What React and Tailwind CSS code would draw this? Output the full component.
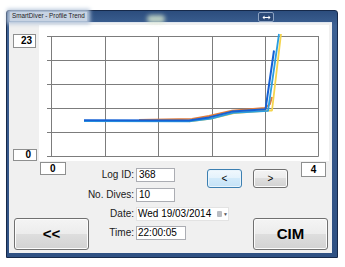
import React from "react";

const btn =
  "flex items-center justify-center border border-[#707070] rounded-[3px] bg-[linear-gradient(#f4f4f4,#ececec_50%,#dedede_50%,#d2d2d2)] shadow-[inset_0_0_0_1px_#fcfcfc]";

const numBox =
  "flex items-center bg-white border border-[#8e8f8f] text-[10px] font-bold text-black leading-none";

const FormRow = ({ label, children, className = "" }) => (
  <div className={`flex items-center ${className}`}>
    <div className="w-[42px] flex justify-end">
      <span className="text-[10px] text-[#1a1a1a] leading-none whitespace-nowrap">{label}</span>
    </div>
    <div className="ml-[2px]">{children}</div>
  </div>
);

const Chart = () => {
  const xs = [12, 66, 119, 173, 226, 279];
  const ys = [11, 35, 59, 83, 107, 131];
  return (
    <svg width="290" height="136" className="block">
      {ys.map((y) => (
        <line key={"h" + y} x1="8" x2="279.5" y1={y + 0.5} y2={y + 0.5} stroke="#7c7c7c" strokeWidth="1" />
      ))}
      {xs.map((x) => (
        <line key={"v" + x} x1={x + 0.5} x2={x + 0.5} y1="11" y2="131.5" stroke="#7c7c7c" strokeWidth="1" />
      ))}
      <polyline
        points="100,95 153,93.8 170,91 193,85.6 226,83 231,79 233,72"
        fill="none" stroke="#e07c3c" strokeWidth="1.8" strokeLinejoin="round" />
      <polyline
        points="150,96.4 172,93.5 195,88 228,85.5 233,85.5 242,9"
        fill="none" stroke="#f4d44c" strokeWidth="1.8" strokeLinejoin="round" />
      <polyline
        points="45,96 150,96.4 172,93.6 194,87.8 229,85.8 240,9"
        fill="none" stroke="#2b9ee0" strokeWidth="1.8" strokeLinejoin="round" />
      <polyline
        points="45,95.2 150,95.6 170,92.4 193,86.6 226.5,84.3 235,25.5"
        fill="none" stroke="#1560d4" strokeWidth="2" strokeLinejoin="round" />
    </svg>
  );
};

export default function App() {
  return (
    <div className="w-[345px] h-[267px] bg-white pt-[10px] pl-[6px] font-['Liberation_Sans',Arial,sans-serif]">
      <div className="relative w-[332px] h-[248px] border border-[#16294a] rounded-t-[3px] bg-[linear-gradient(180deg,#2c4d7d,#3d6193_6%,#37598c_40%,#2f5183)] flex flex-col">
        {/* title bar */}
        <div className="relative h-[11px] flex items-center px-[3px]">
          <span className="px-[2px] h-[9px] flex items-center bg-[#c7d3e3] shadow-[0_0_4px_3px_#b9c8dc] text-[6.3px] text-[#222] leading-none whitespace-nowrap">
            SmartDiver - Profile Trend
          </span>
          <div className="absolute left-[140px] top-[4px] w-[18px] h-[8px] rounded-full bg-[#d9ead0] blur-[2px] opacity-80" />
          <div className="absolute left-[251px] top-[1px] w-[16px] h-[10px] rounded-[2px] border border-[#8da3c2] bg-[#2c4a78] flex items-center justify-center">
            <svg width="9" height="5" viewBox="0 0 9 5">
              <path d="M0.5 2.5 L2.5 0.5 L2.5 4.5 Z M8.5 2.5 L6.5 0.5 L6.5 4.5 Z" fill="#fff" />
              <rect x="2" y="2" width="5" height="1" fill="#fff" />
            </svg>
          </div>
        </div>

        {/* client area */}
        <div className="ml-[2px] mr-[3px] w-[323px] h-[231px] bg-[#f0f0f0] border-t border-[#dfe6ef] flex flex-col">
          {/* chart row */}
          <div className="flex h-[140px]">
            <div className="w-[30px] flex flex-col">
              <div className={`${numBox} ml-[4px] mt-[11px] w-[23px] h-[14px] justify-end pr-[3px]`}>23</div>
              <div className={`${numBox} ml-[4px] mt-auto mb-[1px] w-[24px] h-[12px] justify-end pr-[5px]`}>0</div>
            </div>
            <div className="mt-[2px] w-[290px] h-[136px] bg-white">
              <Chart />
            </div>
          </div>

          {/* controls */}
          <div className="flex h-[91px]">
            <div className="w-[83px] flex flex-col">
              <div className={`${numBox} ml-[31px] w-[26px] h-[13px] pl-[9px]`}>0</div>
              <button className={`${btn} ml-[5px] mt-auto mb-[3px] w-[75px] h-[32px] text-[15px] font-bold text-black`}>
                &lt;&lt;
              </button>
            </div>

            <div className="flex flex-col w-[240px]">
              <div className="flex items-start h-[26px]">
                <FormRow label="Log ID:" className="mt-[6px]">
                  <div className="w-[39px] h-[14px] bg-white border border-[#abadb3] text-[10px] leading-[12px] pl-[2px]">368</div>
                </FormRow>
                <button className="ml-[32px] mt-[7px] w-[35px] h-[19px] flex items-center justify-center rounded-[3px] border border-[#3c7fb1] bg-[linear-gradient(#f1f8fd,#e3f2fc_50%,#d2eafa_50%,#c4e2f7)] shadow-[inset_0_0_0_1px_#e8f4fc] text-[10px] text-black">
                  &lt;
                </button>
                <button className={`${btn} ml-[11px] mt-[7px] w-[35px] h-[19px] text-[10px] text-black`}>
                  &gt;
                </button>
                <div className={`${numBox} ml-[13px] w-[25px] h-[15px] justify-center`}>4</div>
              </div>

              <FormRow label="No. Dives:">
                <div className="w-[39px] h-[14px] bg-white border border-[#abadb3] text-[10px] leading-[12px] pl-[2px]">10</div>
              </FormRow>

              <div className="flex mt-[3px]">
                <div className="w-[137px] flex flex-col">
                  <FormRow label="Date:" className="mt-[2px]">
                    <div className="w-[93px] h-[14px] bg-white border border-[#e3e3e3] flex items-center text-[10px] leading-none pl-[1px] whitespace-nowrap">
                      Wed 19/03/2014
                      <span className="ml-[6px] w-[6px] h-[6px] bg-[#b9bcc2] rounded-[1px]" />
                      <span className="ml-[1px] text-[5px] text-[#555]">▼</span>
                    </div>
                  </FormRow>
                  <FormRow label="Time:" className="mt-[5px]">
                    <div className="w-[50px] h-[14px] bg-white border border-[#abadb3] text-[10px] leading-[12px] pl-[1px]">22:00:05</div>
                  </FormRow>
                </div>
                <button className={`${btn} ml-[24px] mt-[13px] w-[75px] h-[32px] text-[15px] font-bold text-black`}>
                  CIM
                </button>
              </div>
            </div>
          </div>
        </div>
      </div>
    </div>
  );
}
